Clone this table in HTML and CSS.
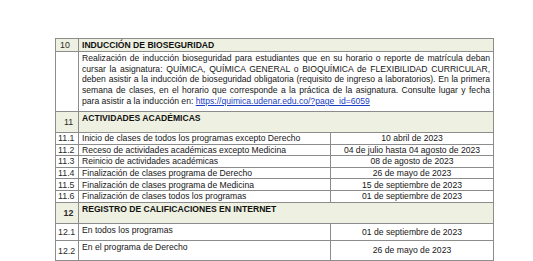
FILE: index.html
```html
<!DOCTYPE html>
<html lang="es">
<head>
<meta charset="utf-8">
<link rel="stylesheet" href="styles.css">
</head>
<body>
<table class="cal">
  <colgroup>
    <col class="c-num">
    <col class="c-desc">
    <col class="c-date">
  </colgroup>
  <tr class="sec sec-10">
    <td class="num num-left">10</td>
    <td class="title" colspan="2">INDUCCIÓN DE BIOSEGURIDAD</td>
  </tr>
  <tr class="para-row">
    <td class="num"></td>
    <td class="para" colspan="2">Realización de inducción bioseguridad para estudiantes que en su horario o reporte de matrícula deban cursar la asignatura: QUÍMICA, QUÍMICA GENERAL o BIOQUÍMICA de FLEXIBILIDAD CURRICULAR, deben asistir a la inducción de bioseguridad obligatoria (requisito de ingreso a laboratorios). En la primera semana de clases, en el horario que corresponde a la práctica de la asignatura. Consulte lugar y fecha para asistir a la inducción en: <a class="link" href="#">https://quimica.udenar.edu.co/?page_id=6059</a></td>
  </tr>
  <tr class="sec sec-tall">
    <td class="num num-center">11</td>
    <td class="title top" colspan="2">ACTIVIDADES ACADÉMICAS</td>
  </tr>
  <tr class="item"><td class="num">11.1</td><td class="desc">Inicio de clases de todos los programas excepto Derecho</td><td class="date">10 abril de 2023</td></tr>
  <tr class="item"><td class="num">11.2</td><td class="desc">Receso de actividades académicas excepto Medicina</td><td class="date">04 de julio hasta 04 agosto de 2023</td></tr>
  <tr class="item"><td class="num">11.3</td><td class="desc">Reinicio de actividades académicas</td><td class="date">08 de agosto de 2023</td></tr>
  <tr class="item"><td class="num">11.4</td><td class="desc">Finalización de clases programa de Derecho</td><td class="date">26 de mayo de 2023</td></tr>
  <tr class="item"><td class="num">11.5</td><td class="desc">Finalización de clases programa de Medicina</td><td class="date">15 de septiembre de 2023</td></tr>
  <tr class="item"><td class="num">11.6</td><td class="desc">Finalización de clases todos los programas</td><td class="date">01 de septiembre de 2023</td></tr>
  <tr class="sec sec-tall">
    <td class="num num-center bold">12</td>
    <td class="title top" colspan="2">REGISTRO DE CALIFICACIONES EN INTERNET</td>
  </tr>
  <tr class="item item-16"><td class="num num-low">12.1</td><td class="desc top">En todos los programas</td><td class="date">01 de septiembre de 2023</td></tr>
  <tr class="item item-19"><td class="num num-low">12.2</td><td class="desc top">En el programa de Derecho</td><td class="date">26 de mayo de 2023</td></tr>
  <tr class="item item-19"><td class="num"></td><td class="desc"></td><td class="date"></td></tr>
</table>
</body>
</html>
```
FILE: styles.css
```css
html, body {
  margin: 0;
  padding: 0;
  background: #ffffff;
}
body {
  font-family: "Liberation Sans", Arial, sans-serif;
  font-size: 8.6px;
  color: #161616;
}
.cal {
  margin: 38px 0 0 55px;
  width: 438px;
  border-collapse: collapse;
  table-layout: fixed;
}
.c-num { width: 23px; }
.c-desc { width: 252px; }
.c-date { width: 163px; }
.cal td {
  border: 1px solid #8c8c8c;
  padding: 0 3px;
  line-height: 10px;
  vertical-align: middle;
  overflow: hidden;
  white-space: nowrap;
}
.cal td.num {
  padding: 0 1px 0 2px;
  font-size: 8.8px;
  color: #2a2a2a;
}
.cal td.num-left { text-align: left; padding-left: 4px; }
.cal td.num-center { text-align: center; padding: 0 0 0 3px; }
.cal td.num-low { padding-top: 1px; }
.bold { font-weight: bold; }
.sec td {
  background: #eef0e1;
}
.sec-10 td { height: 12px; }
.sec-tall td { height: 19px; }
.title {
  font-weight: bold;
  color: #111;
}
.cal td.top { vertical-align: top; padding-top: 1px; }
.para-row td { height: 58px; }
.cal td.para {
  white-space: normal;
  text-align: justify;
  vertical-align: top;
  line-height: 10.7px;
  padding: 1px 3px 0 3px;
}
.link {
  color: #1a3ec2;
  text-decoration: underline;
}
.item td { height: 10.6px; }
.item-16 td { height: 15px; }
.item-19 td { height: 18px; }
.date { text-align: center; }
```
